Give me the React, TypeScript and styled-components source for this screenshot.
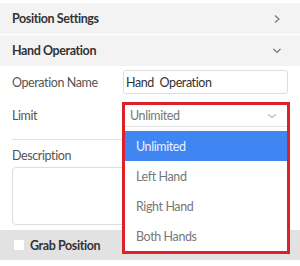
import React from "react";
import styled, { createGlobalStyle } from "styled-components";

const Global = createGlobalStyle`
  html, body { margin: 0; padding: 0; background: #fff; }
  body { font-family: Lato, "Noto Sans", sans-serif; font-size: 12.5px; letter-spacing: -0.4px; color: #333; }
  * { box-sizing: border-box; }
`;

const Page = styled.div`
  width: 300px;
  height: 266px;
  overflow: hidden;
  padding-top: 3px;
  display: flex;
  flex-direction: column;
`;

const SectionHeader = styled.div`
  height: 31px;
  background: #f3f3f3;
  display: flex;
  align-items: center;
  justify-content: space-between;
  padding: 0 18px 0 12px;
  font-weight: 700;
  color: #333;
  & + & { margin-top: 1px; }
`;

const Chevron = styled.svg`
  width: 10px;
  height: 10px;
  stroke: #777;
  fill: none;
  stroke-width: 1.2;
`;

const Form = styled.div`
  display: flex;
  flex-direction: column;
  padding: 4px 12px 0 12px;
`;

const Row = styled.div<{ $gap?: number }>`
  display: grid;
  grid-template-columns: 111px 1fr;
  align-items: center;
  height: 24px;
  margin-top: ${(p) => p.$gap ?? 0}px;
`;

const Label = styled.div`
  color: #555;
`;

const TextInput = styled.div`
  height: 24px;
  border: 1px solid #ddd;
  border-radius: 3px;
  padding: 0 2px;
  display: flex;
  align-items: center;
  color: #333;
  white-space: pre;
`;

const SelectCell = styled.div`
  position: relative;
  height: 24px;
`;

const Highlight = styled.div`
  position: absolute;
  top: -1px;
  left: -1px;
  right: -2px;
  border: 3px solid #dc2128;
  background: #fff;
  z-index: 2;
  display: flex;
  flex-direction: column;
`;

const SelectField = styled.div`
  height: 22px;
  border-bottom: 1px solid #e4e4e4;
  display: flex;
  align-items: center;
  justify-content: space-between;
  padding: 0 10px 0 5px;
  color: #777;
`;

const Menu = styled.div`
  margin-top: 4px;
  display: flex;
  flex-direction: column;
`;

const Option = styled.div<{ $active?: boolean }>`
  height: 30px;
  display: flex;
  align-items: center;
  padding-left: 11px;
  color: ${(p) => (p.$active ? "#eaf1ff" : "#777")};
  background: ${(p) => (p.$active ? "#3f86f3" : "transparent")};
`;

const Divider = styled.div`
  height: 1px;
  background: #e4e4e4;
  margin-top: 12px;
`;

const DescLabel = styled.div`
  color: #555;
  margin-top: 6px;
  height: 18px;
  display: flex;
  align-items: center;
`;

const TextArea = styled.div`
  margin-top: 3px;
  height: 58px;
  border: 1px solid #ddd;
  border-radius: 4px;
`;

const GrabBar = styled.div`
  margin-top: 5px;
  height: 30px;
  background: #e2e2e2;
  display: flex;
  align-items: center;
  padding-left: 14px;
  gap: 6px;
  font-weight: 700;
  color: #333;
`;

const Check = styled.span`
  width: 10px;
  height: 10px;
  background: #fff;
  display: inline-block;
`;

export default function App() {
  return (
    <>
      <Global />
      <Page>
        <SectionHeader>
          Position Settings
          <Chevron viewBox="0 0 10 10">
            <path d="M3 1.5 L7 5 L3 8.5" />
          </Chevron>
        </SectionHeader>
        <SectionHeader>
          Hand Operation
          <Chevron viewBox="0 0 10 10">
            <path d="M1.5 3 L5 6.5 L8.5 3" />
          </Chevron>
        </SectionHeader>
        <Form>
          <Row>
            <Label>Operation Name</Label>
            <TextInput>{"Hand  Operation"}</TextInput>
          </Row>
          <Row $gap={9}>
            <Label>Limit</Label>
            <SelectCell>
              <Highlight>
                <SelectField>
                  Unlimited
                  <Chevron viewBox="0 0 10 10" style={{ stroke: "#bbb" }}>
                    <path d="M1 3.5 L5 6.5 L9 3.5" />
                  </Chevron>
                </SelectField>
                <Menu>
                  <Option $active>Unlimited</Option>
                  <Option>Left Hand</Option>
                  <Option>Right Hand</Option>
                  <Option>Both Hands</Option>
                </Menu>
              </Highlight>
            </SelectCell>
          </Row>
          <Divider />
          <DescLabel>Description</DescLabel>
          <TextArea />
        </Form>
        <GrabBar>
          <Check />
          Grab Position
        </GrabBar>
      </Page>
    </>
  );
}
